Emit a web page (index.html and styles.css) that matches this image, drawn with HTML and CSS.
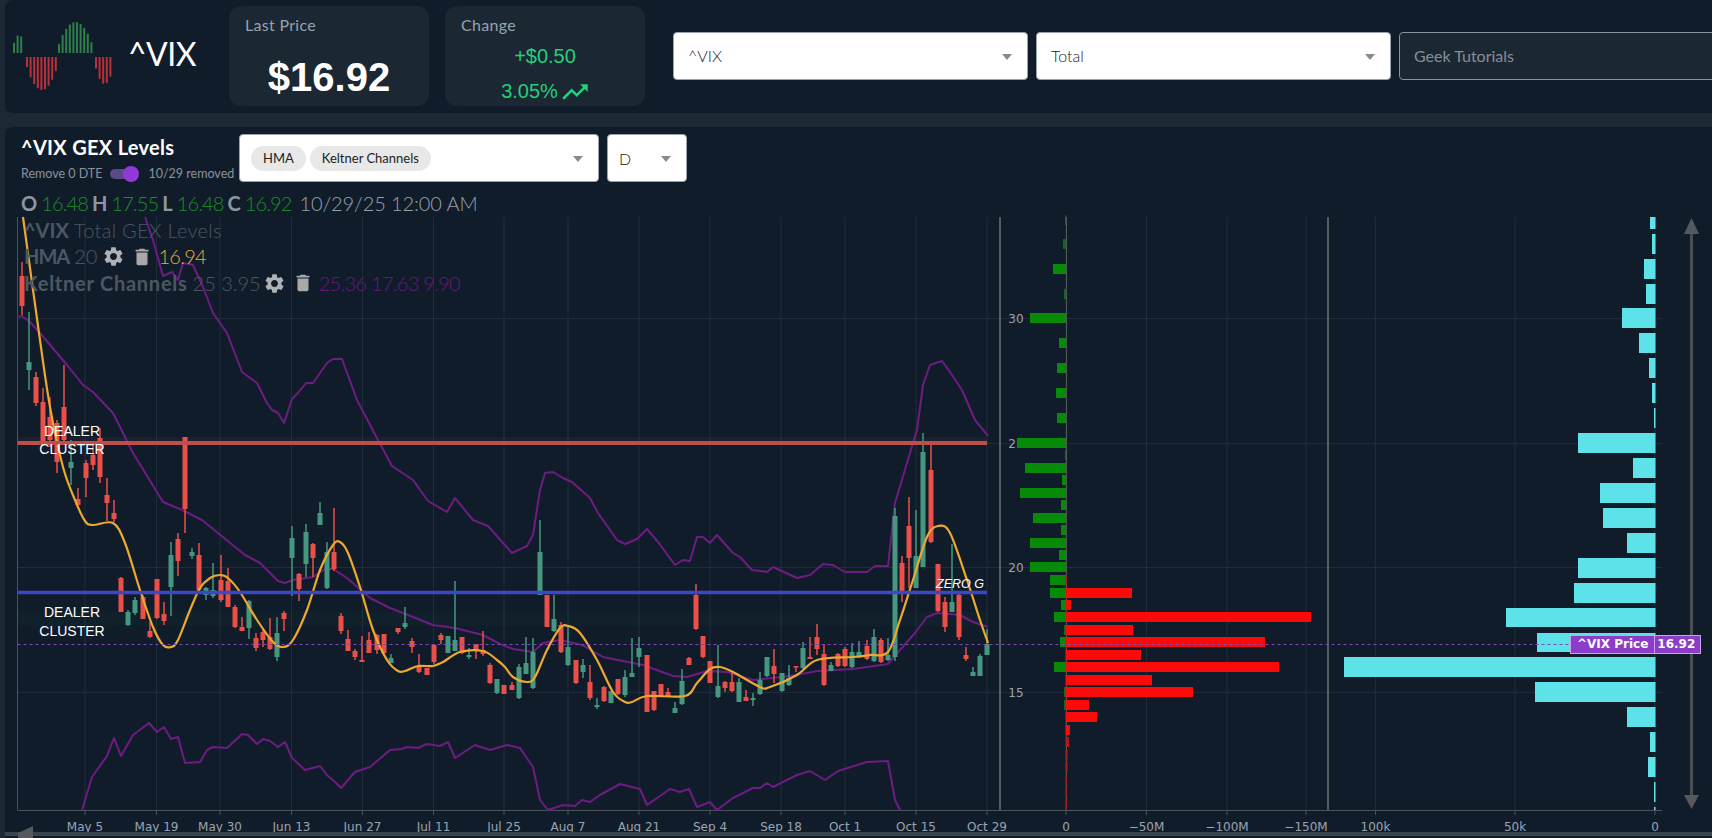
FILE: index.html
```html
<!DOCTYPE html>
<html lang="en">
  <head>
    <meta charset="utf-8" />
    <title>^VIX GEX Levels</title>
    <link rel="stylesheet" href="styles.css">
  </head>

  <body>
    <!-- Ticker header -->
    <div class="top-bar">
      <div class="brand">
        <svg id="logo" class="logo" width="102" height="72" viewBox="12 20 102 72"></svg>
        <span class="ticker">^VIX</span>
      </div>
      <div class="stat-card">
        <div class="stat-label">Last Price</div>
        <div class="stat-price">$16.92</div>
      </div>
      <div class="stat-card">
        <div class="stat-label">Change</div>
        <div class="stat-change">
          <div>+$0.50</div>
          <div class="stat-pct">3.05%
            <svg width="28" height="28" viewBox="1 3 22 18"><path d="M16 6l2.29 2.29-4.88 4.88-4-4L2 16.59 3.41 18l6-6 4 4 6.3-6.29L22 12V6z" fill="currentColor"/></svg>
          </div>
        </div>
      </div>
      <div class="top-selects">
        <div class="select select-symbol">^VIX<span class="caret"></span></div>
        <div class="select select-type">Total<span class="caret"></span></div>
        <div class="search-box">Geek Tutorials</div>
      </div>
    </div>

    <!-- Chart panel -->
    <div class="chart-panel">
      <div class="chart-head">
        <div class="chart-title-group">
          <div class="chart-title">^VIX GEX Levels</div>
          <div class="dte-row">
            <span>Remove 0 DTE</span>
            <span class="toggle"><span class="toggle-thumb"></span></span>
            <span>10/29 removed</span>
          </div>
        </div>
        <div class="select select-studies">
          <span class="chip">HMA</span>
          <span class="chip">Keltner Channels</span>
          <span class="caret"></span>
        </div>
        <div class="select select-period">D<span class="caret"></span></div>
      </div>

      <div class="ohlc">
        <b>O</b> <i>16.48</i> <b>H</b> <i>17.55</i> <b>L</b> <i>16.48</i> <b>C</b> <i>16.92</i> <span>10/29/25 12:00 AM</span>
      </div>

      <div class="chart-wrap">
        <svg id="chart" class="chart" viewBox="5 215 1707 623" width="1707" height="623"></svg>

        <div class="legend">
          <div class="legend-row legend-title"><b>^VIX</b> <span>Total GEX Levels</span></div>
          <div class="legend-row legend-hma">
            <b>HMA</b> <span>20</span>
            <svg class="gear" width="23" height="23" viewBox="0 0 24 24"><path d="M19.14 12.94c.04-.3.06-.61.06-.94 0-.32-.02-.64-.07-.94l2.03-1.58a.49.49 0 0 0 .12-.61l-1.92-3.32a.488.488 0 0 0-.59-.22l-2.39.96c-.5-.38-1.03-.7-1.62-.94l-.36-2.54a.484.484 0 0 0-.48-.41h-3.84c-.24 0-.43.17-.47.41l-.36 2.54c-.59.24-1.13.57-1.62.94l-2.39-.96c-.22-.08-.47 0-.59.22L2.74 8.87c-.12.21-.08.47.12.61l2.03 1.58c-.05.3-.09.63-.09.94s.02.64.07.94l-2.03 1.58a.49.49 0 0 0-.12.61l1.92 3.32c.12.22.37.29.59.22l2.39-.96c.5.38 1.03.7 1.62.94l.36 2.54c.05.24.24.41.48.41h3.84c.24 0 .44-.17.47-.41l.36-2.54c.59-.24 1.13-.56 1.62-.94l2.39.96c.22.08.47 0 .59-.22l1.92-3.32c.12-.22.07-.47-.12-.61l-2.01-1.58zM12 15.6c-1.98 0-3.6-1.62-3.6-3.6s1.62-3.6 3.6-3.6 3.6 1.62 3.6 3.6-1.62 3.6-3.6 3.6z"/></svg>
            <svg class="trash" width="22" height="22" viewBox="0 0 24 24"><path d="M6 19c0 1.1.9 2 2 2h8c1.1 0 2-.9 2-2V7H6v12zM19 4h-3.5l-1-1h-5l-1 1H5v2h14V4z"/></svg>
            <em class="hma-val">16.94</em>
          </div>
          <div class="legend-row legend-kc">
            <b>Keltner Channels</b> <span>25 3.95</span>
            <svg class="gear" width="23" height="23" viewBox="0 0 24 24"><path d="M19.14 12.94c.04-.3.06-.61.06-.94 0-.32-.02-.64-.07-.94l2.03-1.58a.49.49 0 0 0 .12-.61l-1.92-3.32a.488.488 0 0 0-.59-.22l-2.39.96c-.5-.38-1.03-.7-1.62-.94l-.36-2.54a.484.484 0 0 0-.48-.41h-3.84c-.24 0-.43.17-.47.41l-.36 2.54c-.59.24-1.13.57-1.62.94l-2.39-.96c-.22-.08-.47 0-.59.22L2.74 8.87c-.12.21-.08.47.12.61l2.03 1.58c-.05.3-.09.63-.09.94s.02.64.07.94l-2.03 1.58a.49.49 0 0 0-.12.61l1.92 3.32c.12.22.37.29.59.22l2.39-.96c.5.38 1.03.7 1.62.94l.36 2.54c.05.24.24.41.48.41h3.84c.24 0 .44-.17.47-.41l.36-2.54c.59-.24 1.13-.56 1.62-.94l2.39.96c.22.08.47 0 .59-.22l1.92-3.32c.12-.22.07-.47-.12-.61l-2.01-1.58zM12 15.6c-1.98 0-3.6-1.62-3.6-3.6s1.62-3.6 3.6-3.6 3.6 1.62 3.6 3.6-1.62 3.6-3.6 3.6z"/></svg>
            <svg class="trash" width="22" height="22" viewBox="0 0 24 24"><path d="M6 19c0 1.1.9 2 2 2h8c1.1 0 2-.9 2-2V7H6v12zM19 4h-3.5l-1-1h-5l-1 1H5v2h14V4z"/></svg>
            <em class="kc-val">25.36 17.63 9.90</em>
          </div>
        </div>

        <div class="price-tag"><span>^VIX Price</span><span class="price-tag-val">16.92</span></div>
      </div>
    </div>

    <script src="chart.js"></script>
  </body>
</html>
```

FILE: styles.css
```css
* {
  box-sizing: border-box;
}
html, body {
  height: 100%;
}
body {
  margin: 0;
  padding-left: 5px;
  overflow: hidden;
  background-color: #1c2834;
  font-family: Lato, "Liberation Sans", sans-serif;
  color: #98a2ad;
}
.top-bar {
  display: flex;
  height: 113px;
  padding-top: 6px;
  background-color: #111c2b;
  border-radius: 8px 0 0 8px;
  overflow: hidden;
}
.brand {
  display: flex;
  flex: 0 0 224px;
  align-items: flex-start;
  padding-left: 7px;
}
.logo {
  margin-top: 14px;
}
.ticker {
  margin: 28px 0 0 14px;
  font-size: 32px;
  line-height: 40px;
  letter-spacing: -0.5px;
  color: #fff;
}
.stat-card {
  flex: 0 0 200px;
  height: 100px;
  margin-right: 16px;
  padding: 9px 16px;
  background-color: #1b2733;
  border-radius: 12px;
}
.stat-label {
  font-size: 16px;
  line-height: 20px;
  letter-spacing: 0.3px;
}
.stat-price {
  margin-top: 19px;
  text-align: center;
  font-family: "Liberation Sans", sans-serif;
  font-size: 40px;
  line-height: 46px;
  font-weight: 700;
  color: #fff;
}
.stat-change {
  margin-top: 4px;
  text-align: center;
  font-family: "Liberation Sans", sans-serif;
  font-size: 20px;
  line-height: 35px;
  color: #25d07a;
}
.stat-pct {
  display: flex;
  align-items: center;
  justify-content: center;
  gap: 3px;
}
.top-selects {
  display: flex;
  flex: 0 0 auto;
  gap: 8px;
  height: 48px;
  margin: 26px 0 0 12px;
}
.select {
  position: relative;
  display: flex;
  align-items: center;
  height: 48px;
  padding: 0 0 2px 14px;
  background-color: #fff;
  border: 1px solid #9aa3ad;
  border-radius: 4px;
  font-size: 16px;
  font-weight: 300;
  color: #222;
}
.select-symbol,
.select-type {
  width: 355px;
}
.caret {
  position: absolute;
  right: 15px;
  top: 21px;
  border-left: 5px solid transparent;
  border-right: 5px solid transparent;
  border-top: 6px solid #8a8a8a;
}
.search-box {
  display: flex;
  align-items: center;
  width: 340px;
  padding: 0 0 2px 14px;
  background-color: #1b2733;
  border: 1px solid #8b939b;
  border-radius: 4px;
  font-size: 16px;
  color: #868f98;
}
.chart-panel {
  height: 711px;
  margin-top: 14px;
  background-color: #111c2b;
  border-radius: 8px 0 0 0;
}
.chart-head {
  display: flex;
  align-items: flex-start;
  height: 54px;
  padding: 7px 0 0 16px;
}
.chart-title-group {
  width: 218px;
}
.chart-title {
  font-size: 20px;
  line-height: 26px;
  font-weight: 700;
  letter-spacing: 0.3px;
  color: #fff;
}
.dte-row {
  display: flex;
  align-items: center;
  gap: 8px;
  margin-top: 5px;
  font-size: 12.5px;
  line-height: 18px;
  color: #8a939c;
}
.toggle {
  position: relative;
  width: 26px;
  height: 10px;
  margin-right: 4px;
  background-color: #5a4b86;
  border-radius: 5px;
}
.toggle-thumb {
  position: absolute;
  right: -3px;
  top: -3px;
  width: 16px;
  height: 16px;
  background-color: #9038d8;
  border-radius: 50%;
}
.select-studies {
  gap: 4px;
  width: 360px;
  padding: 0 0 0 11px;
  margin-right: 8px;
}
.select-period {
  width: 80px;
  padding: 0 0 0 11px;
}
.chip {
  padding: 0 12px;
  height: 25px;
  line-height: 25px;
  background-color: #e8e8e8;
  border-radius: 13px;
  font-size: 13px;
  font-weight: 400;
  color: #222;
}
.ohlc {
  height: 34px;
  padding: 9px 0 0 16px;
  font-size: 20px;
  line-height: 26px;
  word-spacing: -1px;
  white-space: nowrap;
}
.ohlc b {
  font-weight: 700;
  color: #8d97a2;
}
.ohlc i {
  font-style: normal;
  font-weight: 300;
  letter-spacing: -0.9px;
  color: #1c8f24;
}
.ohlc span {
  margin-left: 4px;
  font-weight: 300;
  letter-spacing: -0.1px;
  word-spacing: 0;
}
.chart-wrap {
  position: relative;
  height: 623px;
}
.chart {
  display: block;
}
.legend {
  position: absolute;
  left: 19px;
  top: 2px;
  font-size: 20px;
  line-height: 27px;
  color: #4c5763;
}
.legend-row {
  display: flex;
  align-items: center;
  gap: 5px;
  height: 26.5px;
  white-space: nowrap;
}
.legend-row span {
  font-weight: 300;
}
.legend-row em {
  font-style: normal;
  font-weight: 300;
  letter-spacing: -0.7px;
}
.legend-title span {
  letter-spacing: 0.3px;
}
.legend-hma b {
  letter-spacing: -1px;
}
.legend-kc b {
  letter-spacing: 0.75px;
}
.gear {
  margin-left: -3px;
  fill: #aeb2b7;
}
.legend-hma .gear {
  margin-left: 0;
}
.trash {
  margin-left: 1px;
  fill: #a9a9ab;
}
.hma-val {
  margin-left: 0;
  color: #eca93e;
}
.kc-val {
  margin-left: 0;
  color: #66197c;
}
.price-tag {
  position: absolute;
  left: 1565px;
  top: 420px;
  display: flex;
  height: 19px;
  border: 1px solid #c9a5e8;
  background-color: #8d3cc8;
  font-family: "DejaVu Sans", sans-serif;
  font-size: 12px;
  line-height: 17px;
  font-weight: 700;
  color: #fff;
}
.price-tag span {
  padding: 0 6px;
}
.price-tag .price-tag-val {
  padding: 0 5px 0 2px;
  border-left: 1px solid #c9a5e8;
}
.tick {
  font-family: "DejaVu Sans", sans-serif;
  font-size: 12px;
  fill: #9aa4b0;
  text-anchor: middle;
}
.note {
  font-family: "Liberation Sans", sans-serif;
  font-size: 14px;
  fill: #fff;
  text-anchor: middle;
}
.note-italic {
  font-size: 12.5px;
  font-style: italic;
}
```

FILE: chart.js
```js
// draws the logo and the GEX chart, all coordinates are page pixels
var GREEN = '#46977f';
var RED = '#ea4f48';
var PURPLE = '#6d1c82';
var ORANGE = '#eca92f';

// [x, color, high, bodyTop, bodyBottom, low]
var candles = [
  [22,'r',262,276,306,315],[29,'g',312,362,370,390],[36,'r',372,377,403,406],[43,'r',388,402,442,443],
  [50,'r',397,417,440,447],[57,'r',420,423,462,473],[64,'r',365,407,440,443],[71,'g',440,462,468,485],
  [78,'r',488,499,505,505],[86,'r',460,463,478,497],[93,'r',443,455,465,470],[100,'r',428,438,477,483],
  [107,'r',478,495,503,521],[114,'r',500,513,519,522],[121,'r',577,578,612,612],[128,'g',610,612,625,626],
  [135,'g',597,600,613,615],[143,'r',595,597,619,619],[150,'r',622,631,637,638],[157,'r',579,579,618,619],
  [164,'r',602,614,621,625],[171,'g',542,555,587,616],[178,'r',533,539,561,576],[185,'r',437,437,509,533],
  [192,'g',548,552,556,559],[199,'r',543,555,590,592],[206,'g',587,588,595,600],[213,'g',563,590,596,598],
  [221,'r',555,580,600,602],[228,'r',568,581,607,607],[235,'r',605,607,627,628],[242,'r',617,627,631,631],
  [249,'g',600,601,628,639],[256,'r',633,638,648,651],[263,'r',628,632,640,647],[270,'r',618,637,649,650],
  [277,'g',617,633,657,661],[284,'r',611,613,619,631],[292,'g',526,538,558,596],[299,'r',573,574,589,601],
  [306,'g',524,532,564,577],[313,'r',543,544,558,577],[320,'g',502,513,525,525],[327,'g',542,552,588,589],
  [334,'r',508,552,569,571],[341,'r',613,616,631,634],[348,'r',630,639,651,651],[355,'r',649,651,657,660],
  [362,'r',636,660,662,662],[369,'r',632,640,653,653],[377,'r',634,635,650,654],[384,'r',634,634,653,654],
  [391,'g',654,658,663,663],[398,'r',628,628,632,634],[405,'g',607,623,627,629],[412,'r',638,641,647,653],
  [419,'r',654,667,672,673],[427,'r',668,668,675,675],[434,'r',644,645,662,664],[441,'r',633,635,640,644],
  [448,'g',636,636,653,653],[455,'g',581,640,651,651],[462,'r',637,637,653,654],[469,'g',648,655,657,659],
  [476,'r',644,644,651,659],[483,'r',631,650,654,656],[490,'r',663,665,683,684],[497,'g',679,679,693,694],
  [504,'r',685,685,694,694],[512,'r',682,685,690,690],[519,'g',664,667,698,699],[526,'g',637,663,674,674],
  [533,'g',638,652,688,689],[540,'g',520,552,595,595],[547,'r',595,595,627,627],[554,'g',595,619,631,632],
  [561,'r',622,625,652,653],[568,'g',627,647,665,666],[576,'r',660,660,683,684],[583,'g',659,665,672,678],
  [590,'r',665,682,698,700],[597,'g',698,705,707,709],[604,'r',686,687,701,702],[611,'g',691,691,703,703],
  [618,'r',679,679,694,695],[625,'g',670,677,695,697],[632,'g',638,673,677,677],[639,'g',637,648,657,667],
  [647,'r',655,655,712,712],[654,'r',691,691,710,711],[661,'r',684,684,697,697],[668,'r',688,692,696,696],
  [675,'g',702,708,713,713],[682,'g',669,681,704,705],[689,'r',657,658,665,665],[696,'r',584,595,629,630],
  [703,'r',636,636,657,658],[710,'r',661,661,683,683],[718,'g',645,686,697,698],[725,'r',681,682,688,692],
  [732,'r',673,682,691,692],[739,'g',678,682,702,702],[746,'r',690,697,701,701],[753,'g',693,698,700,706],
  [760,'g',672,680,694,695],[767,'g',657,657,676,677],[774,'r',649,666,674,683],[782,'g',673,673,691,692],
  [789,'g',665,678,685,686],[796,'r',666,666,667,672],[803,'g',642,648,668,669],[810,'r',637,657,659,659],
  [817,'r',624,637,649,655],[824,'r',644,654,685,686],[831,'g',662,665,671,671],[838,'r',653,654,666,667],
  [845,'r',647,649,666,667],[852,'g',643,652,667,668],[859,'g',641,652,657,658],[867,'r',640,646,659,660],
  [874,'g',629,637,661,662],[881,'r',638,640,662,663],[888,'g',638,655,660,661],[895,'g',508,516,657,661],
  [902,'r',556,563,594,602],[909,'r',497,526,558,588],[916,'g',510,556,588,588],[923,'g',433,452,567,567],
  [931,'r',441,470,542,543],[938,'r',564,564,611,612],[945,'r',597,602,627,632],[952,'g',544,602,612,612],
  [959,'r',594,595,637,640],[966,'r',647,655,659,661],[973,'g',667,672,676,676],[980,'g',654,656,676,676],
  [987,'g',629,644,655,655]
];

var kcUpper = [[145,217],[153,240],[163,276],[172,272],[178,280],[183,263],[193,265],[203,287],[213,313],[227,333],[242,372],[257,383],[267,403],[272,410],[278,413],[284,423],[292,399],[298,393],[306,383],[313,383],[327,363],[333,359],[342,359],[357,400],[378,440],[392,466],[413,480],[428,501],[447,512],[455,498],[473,520],[488,526],[503,543],[512,553],[527,546],[533,535],[540,490],[545,473],[553,472],[563,478],[572,482],[590,498],[598,513],[617,540],[625,544],[637,539],[647,529],[658,542],[675,565],[683,560],[690,561],[697,537],[703,537],[710,543],[717,535],[733,553],[740,557],[752,570],[767,572],[773,567],[797,578],[810,575],[823,564],[833,565],[845,572],[867,572],[875,566],[888,566],[895,503],[907,463],[917,430],[923,385],[930,365],[942,361],[950,372],[962,390],[975,420],[988,436]];
var kcMiddle = [[17,317],[22,316],[30,322],[40,333],[67,365],[83,385],[93,392],[113,413],[133,453],[163,502],[182,510],[202,520],[245,555],[260,563],[278,581],[285,583],[293,580],[313,577],[325,569],[333,569],[347,578],[370,598],[390,608],[403,613],[433,625],[455,628],[483,635],[500,644],[513,649],[533,652],[543,643],[560,640],[582,645],[603,657],[633,663],[643,665],[673,676],[687,677],[707,671],[727,672],[753,680],[783,677],[807,673],[817,671],[853,669],[888,664],[900,650],[915,633],[927,617],[937,613],[960,615],[973,622],[988,627]];
var kcLower = [[82,810],[92,777],[107,756],[114,738],[121,756],[133,735],[149,723],[157,732],[164,727],[171,739],[178,737],[185,763],[200,762],[207,750],[213,747],[227,748],[242,734],[248,735],[257,744],[263,739],[270,741],[278,747],[285,742],[292,758],[305,770],[320,766],[327,775],[335,782],[341,788],[355,772],[370,767],[390,750],[402,749],[407,747],[418,748],[427,744],[440,746],[448,742],[455,758],[475,745],[490,750],[507,745],[520,748],[533,767],[540,800],[548,810],[563,805],[575,806],[582,800],[590,802],[600,795],[620,784],[640,789],[647,805],[670,789],[680,792],[689,789],[697,807],[710,802],[717,810],[733,798],[753,788],[760,788],[767,783],[773,787],[797,775],[810,771],[825,780],[838,771],[867,762],[888,761],[895,800],[900,810]];
var hma = [[23,217],[39,333],[50,407],[63,467],[75,500],[85,521],[93,525],[113,523],[125,543],[140,590],[153,627],[163,645],[171,647],[178,640],[190,610],[200,588],[210,578],[220,575],[228,578],[240,592],[257,620],[273,642],[283,647],[293,640],[307,610],[320,570],[333,545],[340,542],[348,553],[360,587],[373,630],[387,660],[398,671],[405,671],[418,666],[433,666],[443,662],[460,652],[483,651],[497,660],[505,667],[513,677],[527,682],[535,677],[547,650],[560,628],[568,626],[580,633],[597,660],[613,692],[625,702],[632,702],[647,696],[685,696],[697,683],[710,669],[720,667],[733,672],[760,687],[770,687],[797,675],[817,660],[853,657],[870,655],[888,652],[900,620],[913,580],[927,537],[938,526],[950,533],[967,580],[980,620],[988,643]];

// gamma rows: [y, left edge], all end at the zero line
var gammaUp = [[220,1065],[244,1063],[269,1053],[294,1064],[318,1030],[343,1059],[368,1057],[393,1056],[418,1057],[443,1017],[455,1065],[468,1025],[480,1062],[493,1020],[505,1061],[518,1033],[530,1061],[543,1030],[555,1059],[567,1030],[580,1050],[593,1050],[605,1061],[617,1054],[630,1064],[642,1060],[667,1054],[692,1064],[705,1064]];
var gammaDown = [[580,1067],[593,1132],[605,1071],[617,1311],[630,1133],[642,1265],[655,1141],[667,1279],[680,1152],[692,1193],[705,1089],[717,1097],[730,1070],[742,1069],[755,1067.5],[767,1067.5],[780,1067],[792,1067],[805,1067]];
// open interest rows: [top, bottom, left edge]
var oi = [[217,229,1650],[234,254,1652],[259,279,1644],[284,304,1646],[308,328,1622],[333,353,1639],[358,378,1649],[383,403,1652],[408,428,1654],[433,453,1578],[458,478,1633],[483,503,1600],[508,528,1603],[533,553,1627],[558,578,1578],[583,603,1574],[608,627,1506],[633,652,1537],[657,677,1344],[682,702,1535],[707,727,1627],[732,752,1650],[757,777,1648],[782,802,1654],[807,810,1654]];

var xTicks = [[85,'May 5'],[156.5,'May 19'],[220,'May 30'],[291.5,'Jun 13'],[362.5,'Jun 27'],[433.5,'Jul 11'],[504,'Jul 25'],[568,'Aug 7'],[639,'Aug 21'],[710,'Sep 4'],[781,'Sep 18'],[845,'Oct 1'],[916,'Oct 15'],[987,'Oct 29'],[1066,'0'],[1146.5,'\u221250M'],[1227,'\u2212100M'],[1306,'\u2212150M'],[1375.5,'100k'],[1515,'50k'],[1655,'0']];
var yTicks = [[318,'30'],[443,'25'],[567,'20'],[692,'15']];

function rect(x, y, w, h, fill, extra) {
  return '<rect x="' + x + '" y="' + y + '" width="' + w + '" height="' + h + '" fill="' + fill + '"' + (extra || '') + '/>';
}
function line(x1, y1, x2, y2, stroke, w, extra) {
  return '<line x1="' + x1 + '" y1="' + y1 + '" x2="' + x2 + '" y2="' + y2 + '" stroke="' + stroke + '" stroke-width="' + w + '"' + (extra || '') + '/>';
}
function polyline(pts, stroke, w) {
  return '<polyline points="' + pts.join(' ') + '" fill="none" stroke="' + stroke + '" stroke-width="' + w + '" stroke-linejoin="round"/>';
}
function smooth(pts, stroke, w) {
  var d = 'M' + pts[0].join(' ');
  for (var i = 0; i < pts.length - 1; i++) {
    var p0 = pts[Math.max(i - 1, 0)], p1 = pts[i], p2 = pts[i + 1], p3 = pts[Math.min(i + 2, pts.length - 1)];
    d += 'C' + (p1[0] + (p2[0] - p0[0]) / 6).toFixed(1) + ' ' + (p1[1] + (p2[1] - p0[1]) / 6).toFixed(1) + ' ' +
      (p2[0] - (p3[0] - p1[0]) / 6).toFixed(1) + ' ' + (p2[1] - (p3[1] - p1[1]) / 6).toFixed(1) + ' ' + p2[0] + ' ' + p2[1];
  }
  return '<path d="' + d + '" fill="none" stroke="' + stroke + '" stroke-width="' + w + '"/>';
}
function note(x, y, text, cls) {
  return '<text class="note ' + (cls || '') + '" x="' + x + '" y="' + y + '">' + text + '</text>';
}

function drawChart() {
  var s = [];
  var grid = '#212c3a';

  xTicks.forEach(function (t) {
    s.push(line(t[0], 217, t[0], 810, grid, 1));
    s.push(line(t[0], 810, t[0], 815, '#4b535d', 1));
    s.push('<text class="tick" x="' + t[0] + '" y="831">' + t[1] + '</text>');
  });
  yTicks.forEach(function (t) {
    s.push(line(17.5, t[0] + 0.5, 1662, t[0] + 0.5, grid, 1));
    s.push('<text class="tick" x="1016" y="' + (t[0] + 5) + '">' + t[1] + '</text>');
  });

  // faint dealer zones
  s.push(rect(17.5, 437, 970, 4, '#c0504a', ' opacity="0.08"'));
  s.push(rect(17.5, 612, 970, 14, '#1c8f3c', ' opacity="0.05"'));

  // pane frames
  s.push(line(17.5, 217, 17.5, 810, '#4b535d', 1));
  s.push(line(17.5, 810.5, 1662, 810.5, '#4b535d', 1));
  s.push(line(1000, 217, 1000, 810, '#565c62', 2));
  s.push(line(1328, 217, 1328, 810, '#565c62', 2));
  s.push(line(1066.5, 217, 1066.5, 810, '#4f5a52', 1));

  // gamma bars
  gammaUp.forEach(function (b) {
    var w = 1066 - b[1];
    s.push(rect(b[1], b[0] - 5, w, 10, w < 4 ? '#0d6b1b' : '#078a07'));
  });
  gammaDown.forEach(function (b) {
    var w = b[1] - 1066;
    s.push(rect(1065.5, b[0] - 5, w + 0.5, 10, w < 4 ? '#a81c1c' : '#fb0a0a'));
  });

  // open interest bars
  oi.forEach(function (b) {
    s.push(rect(b[2], b[0], 1655.5 - b[2], b[1] - b[0], '#5ce2e8'));
  });

  s.push(polyline(kcUpper, PURPLE, 2));
  s.push(polyline(kcMiddle, PURPLE, 2));
  s.push(polyline(kcLower, PURPLE, 2));

  candles.forEach(function (c) {
    var col = c[1] === 'r' ? RED : GREEN;
    s.push(line(c[0], c[2], c[0], c[5], col, 1.5));
    s.push(rect(c[0] - 2.5, c[3], 5, Math.max(c[4] - c[3], 1.5), col));
  });

  s.push(smooth(hma, ORANGE, 2.2));

  s.push(line(17.5, 443, 987, 443, '#bd4f4a', 4));
  s.push(line(17.5, 592.5, 987, 592.5, '#3c47c8', 3.5));
  s.push(line(17.5, 644.5, 1570, 644.5, '#7a4bb0', 1, ' stroke-dasharray="3 3"'));

  s.push(note(72, 436, 'DEALER'));
  s.push(note(72, 454, 'CLUSTER'));
  s.push(note(72, 617, 'DEALER'));
  s.push(note(72, 636, 'CLUSTER'));
  s.push(note(960, 588, 'ZERO G', 'note-italic'));

  // scroll arrows
  s.push(rect(1690, 232, 3, 565, '#4a4e53'));
  s.push('<polygon points="1691.5,218 1684,234 1699,234" fill="#55585c"/>');
  s.push('<polygon points="1691.5,809 1684,795 1699,795" fill="#55585c"/>');
  s.push(rect(5, 832, 1707, 4, '#3a424c'));
  s.push('<polygon points="18,833 33,826 33,838 18,838" fill="#55585c"/>');

  document.getElementById('chart').innerHTML = s.join('');
}

// one lobe of the logo wave, drawn as thin bars off the center line
function lobe(x0, x1, edge, height, color, down) {
  var out = '';
  for (var x = x0; x <= x1; x += 3.6) {
    var h = height * Math.pow(Math.sin(Math.PI * (x - x0 + 2) / (x1 - x0 + 4)), 0.7);
    out += rect(x, down ? edge : edge - h, 2, h, color);
  }
  return out;
}

function drawLogo() {
  var s = '';
  s += lobe(13, 23, 53, 18, '#2f7f4b', false);
  s += lobe(58, 91, 53, 31, '#2f7f4b', false);
  s += lobe(26, 56, 57, 33, '#b8303a', true);
  s += lobe(95, 112, 57, 27, '#b8303a', true);
  document.getElementById('logo').innerHTML = s;
}

drawLogo();
drawChart();
```
